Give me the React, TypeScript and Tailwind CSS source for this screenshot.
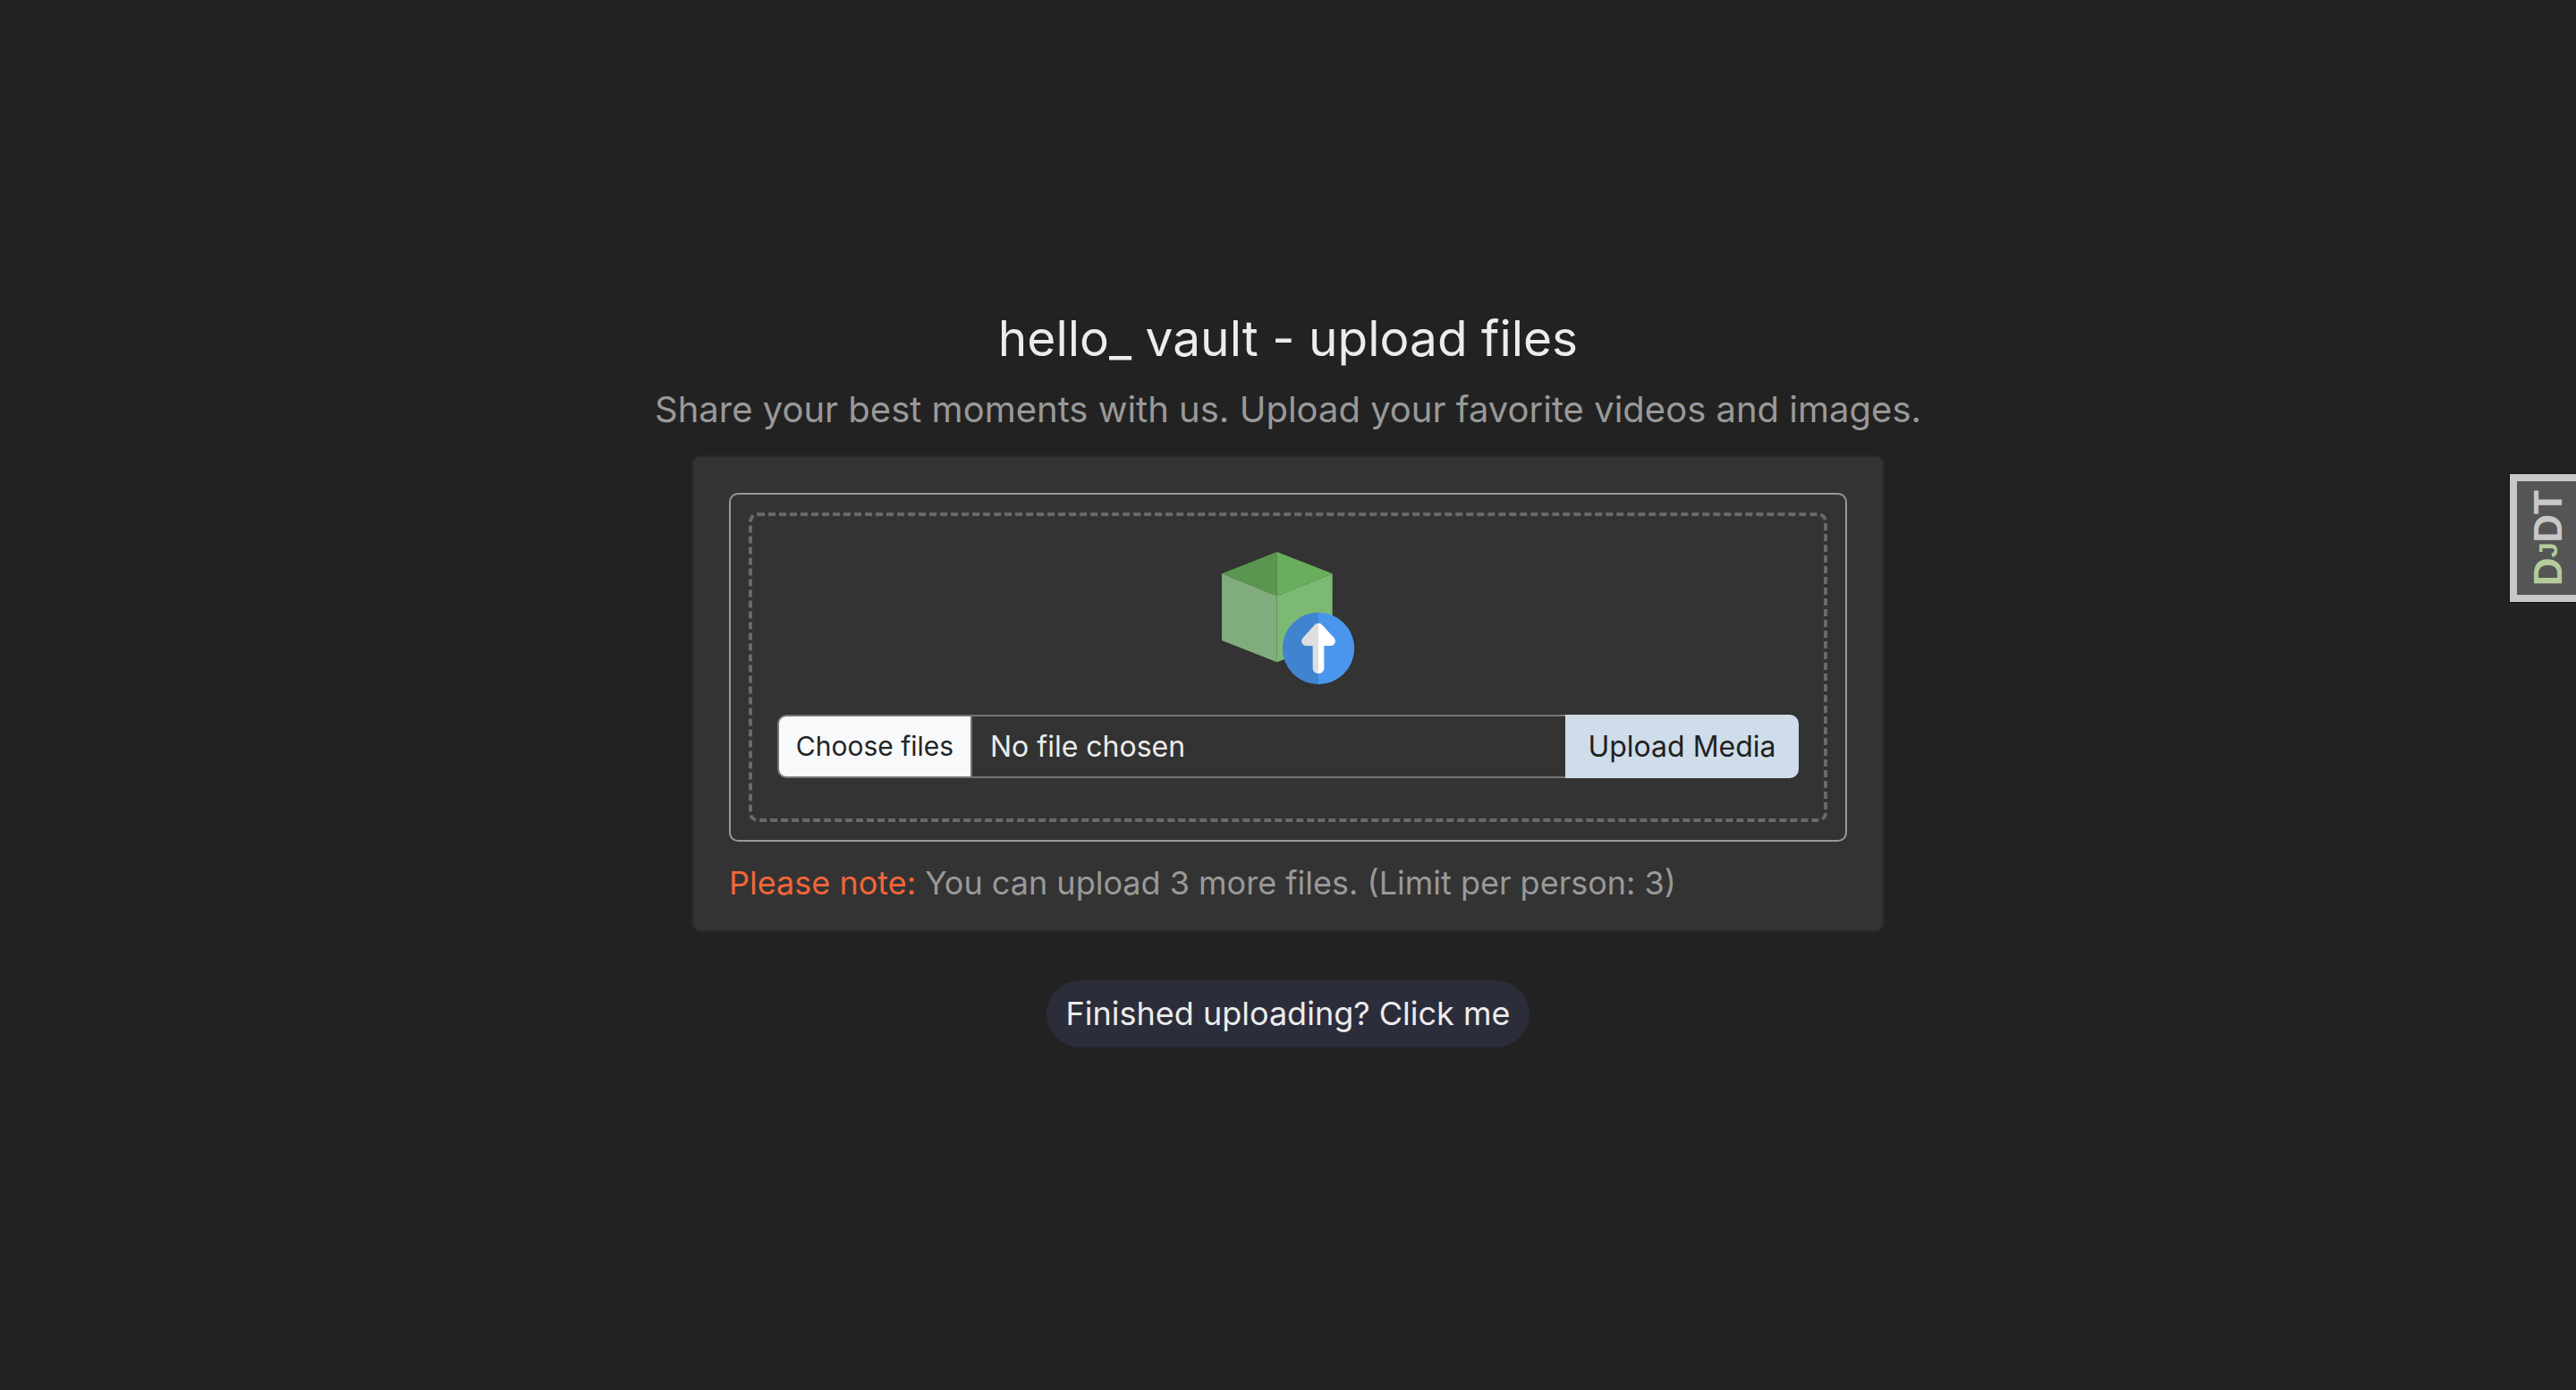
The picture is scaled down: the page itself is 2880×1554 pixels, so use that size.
import { useState } from "react";

function BoxUploadIcon() {
  return (
    <svg viewBox="78 81 444 444" className="h-[148px] w-[148px]" aria-hidden="true">
      <path d="M78 154 263 81V229z" fill="#5a964f" />
      <path d="M263 81 449 154 263 229z" fill="#69ae5c" />
      <path d="M78 154 263 229V451L78 378z" fill="#81ac7d" />
      <path d="M449 154 263 229V451L449 378z" fill="#7cb974" />
      <path d="M402 284a120.500 120.500 0 0 0 0 241z" fill="#4083cf" />
      <path d="M402 284a120.500 120.500 0 0 1 0 241z" fill="#4a96ec" />
      <path d="M402 320c-5 0-10 2-13 6l-39 43c-10 11-3 27 11 27h22v75c0 10 8 18 19 18z" fill="#dedede" />
      <path d="M402 320c5 0 10 2 13 6l39 43c10 11 3 27-11 27h-22v75c0 10-8 18-19 18z" fill="#ffffff" />
    </svg>
  );
}

function UploadForm() {
  const [fileLabel, setFileLabel] = useState("No file chosen");

  return (
    <form
      className="flex w-full items-stretch text-[32px] leading-[47px]"
      onSubmit={(event) => event.preventDefault()}
    >
      <label
        htmlFor="media-files"
        className="flex min-w-0 flex-1 cursor-pointer overflow-hidden rounded-l-[10px] border-2 border-r-0 border-[#757575] focus-within:border-[#cfdce9]"
      >
        <span className="flex w-[216px] shrink-0 items-center justify-center border-r-2 border-[#757575] bg-[#f8f9fa] py-[10px] text-[30px] text-[#212529]">
          Choose files
        </span>
        <span className="flex items-center px-5 text-[#ececec]">{fileLabel}</span>
        <input
          id="media-files"
          type="file"
          multiple
          className="sr-only"
          onChange={(event) => {
            const count = event.target.files?.length ?? 0;
            setFileLabel(count === 0 ? "No file chosen" : `${count} files`);
          }}
        />
      </label>
      <button
        type="submit"
        className="w-[261px] shrink-0 cursor-pointer rounded-r-[10px] bg-[#cfdce9] text-[#212121]"
      >
        Upload Media
      </button>
    </form>
  );
}

function DebugToolbarHandle() {
  return (
    <button
      type="button"
      aria-label="Show toolbar"
      className="fixed top-[529px] right-0 flex h-[145px] w-[75px] cursor-pointer items-center justify-center border border-r-0 border-[#111111] bg-[#c8c8c8] py-2 pl-2"
    >
      <span className="flex h-full w-full items-center justify-center bg-[#555555] pl-1">
        <span className="rotate-180 font-['Liberation_Sans'] text-[44px] leading-none font-bold text-[#c8c8c8] [writing-mode:vertical-rl]">
          <span className="text-[#b4cc9c]">
            D<span className="text-[30px]">J</span>
          </span>
          DT
        </span>
      </span>
    </button>
  );
}

export default function App() {
  return (
    <div className="min-h-screen bg-[#222222] font-['Inter',sans-serif] text-[#ececec]">
      <main className="flex min-h-screen flex-col items-center justify-center pb-[37px]">
        <h1 className="text-[55px] leading-[64px]">hello_ vault - upload files</h1>
        <p className="mt-[18px] text-[40px] leading-[60px] text-[#999999]">
          Share your best moments with us. Upload your favorite videos and images.
        </p>
        <section className="mt-[21px] w-full max-w-[1334px] rounded-[10px] border-2 border-[#292929] bg-[#333333] px-10 pt-10 pb-[27px]">
          <div className="rounded-[10px] border-2 border-[#999999] p-5">
            <div className="flex flex-col items-center rounded-[10px] border-4 border-dashed border-[#696969] px-7 pt-10 pb-[45px]">
              <BoxUploadIcon />
              <div className="mt-[34px] w-full">
                <UploadForm />
              </div>
            </div>
          </div>
          <p className="mt-5 text-[36px] leading-[52px] text-[#999999]">
            <span className="text-[#f0663a]">Please note:</span> You can upload 3 more files. (Limit per
            person: 3)
          </p>
        </section>
        <button
          type="button"
          className="mt-[54px] cursor-pointer rounded-full bg-[#2c2d3a] px-[22px] py-3 text-[36px] leading-[51px]"
        >
          Finished uploading? Click me
        </button>
      </main>
      <DebugToolbarHandle />
    </div>
  );
}
